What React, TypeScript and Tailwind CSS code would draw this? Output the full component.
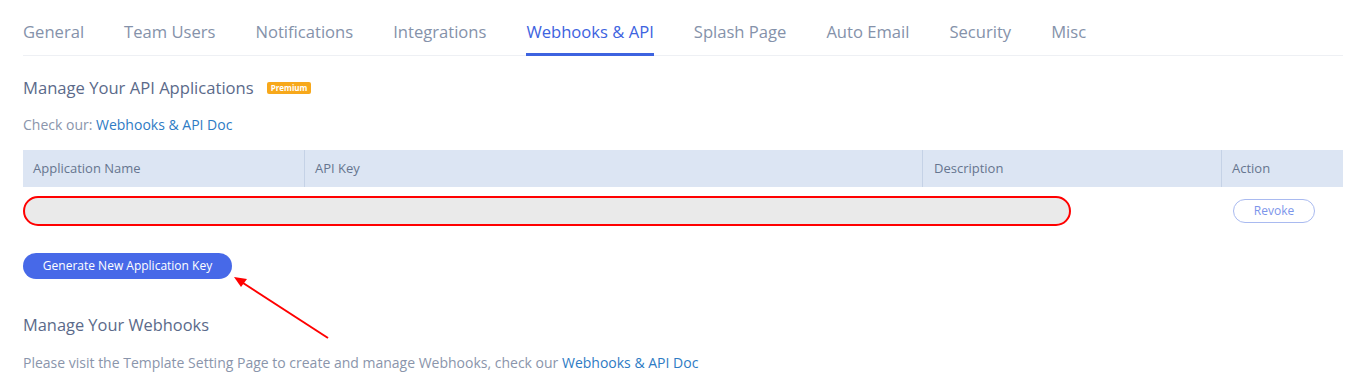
import React from "react";

const tabs = ["General", "Team Users", "Notifications", "Integrations", "Webhooks & API", "Splash Page", "Auto Email", "Security", "Misc"];

export default function App() {
  return (
    <div className="relative w-[1347px] h-[389px] bg-white overflow-hidden" style={{ fontFamily: '"Open Sans", "Noto Sans", sans-serif' }}>
      <div className="pl-[23px] pr-[4px]">
        <div className="flex gap-10 border-b border-[#eef0f4] pt-[20px]">
          {tabs.map((t) => (
            <div
              key={t}
              className={
                "text-[16.6px] leading-[24px] pb-[9px] border-b-[3px] -mb-px " +
                (t === "Webhooks & API" ? "text-[#3d63e0] border-[#3d63e0]" : "text-[#8592aa] border-transparent")
              }
            >
              {t}
            </div>
          ))}
        </div>

        <div className="flex items-center gap-[13px] mt-[20px]">
          <div className="text-[16.6px] leading-[24px] text-[#5b6a8a]">Manage Your API Applications</div>
          <span className="bg-[#f7a81b] text-white text-[8px] font-bold leading-[12px] px-[4px] rounded-[2px]">Premium</span>
        </div>

        <div className="mt-[15px] text-[14px] leading-[20px] text-[#8a95ab]">
          Check our: <span className="text-[#2e7bc4]">Webhooks &amp; API Doc</span>
        </div>

        <div className="mt-[15px]">
          <div className="flex h-[37px] bg-[#dce5f3] text-[13px] text-[#66758f] items-center">
            <div className="w-[282px] h-full flex items-center pl-[10px] border-r border-[#c5d2e6]">Application Name</div>
            <div className="w-[618px] h-full flex items-center pl-[10px] border-r border-[#c5d2e6]">API Key</div>
            <div className="w-[299px] h-full flex items-center pl-[11px] border-r border-[#c5d2e6]">Description</div>
            <div className="flex-1 h-full flex items-center pl-[10px]">Action</div>
          </div>
          <div className="flex items-center h-[48px]">
            <div className="w-[1048px] h-[30px] rounded-full bg-[#eaeaea] border-2 border-[#ff0000]" />
            <div className="ml-[162px] w-[82px] h-[24px] rounded-full border border-[#a9baf0] text-[#7c95ea] text-[12px] flex items-center justify-center">
              Revoke
            </div>
          </div>
        </div>

        <div className="mt-[18px]">
          <div className="w-[209px] h-[26px] rounded-full bg-[#4769e8] text-white text-[12px] flex items-center justify-center">
            Generate New Application Key
          </div>
        </div>

        <div className="mt-[34px] text-[16.4px] leading-[24px] text-[#5b6a8a]">Manage Your Webhooks</div>
        <div className="mt-[16px] text-[14px] leading-[20px] text-[#8a95ab]">
          Please visit the Template Setting Page to create and manage Webhooks, check our <span className="text-[#2e7bc4]">Webhooks &amp; API Doc</span>
        </div>
      </div>

      <svg className="absolute left-0 top-0 pointer-events-none" width="1347" height="389">
        <line x1="328" y1="338" x2="240" y2="281" stroke="#ff0000" strokeWidth="2" />
        <polygon points="234,277 247,279 241,287" fill="#ff0000" />
      </svg>
    </div>
  );
}
